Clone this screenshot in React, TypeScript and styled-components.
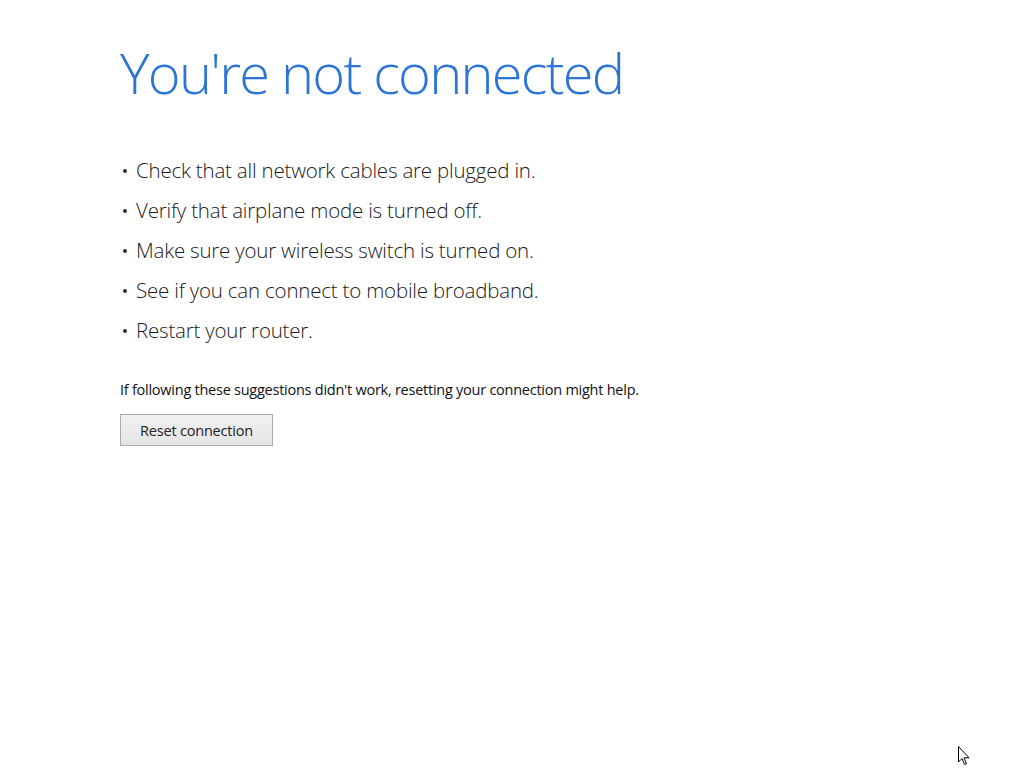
import React from 'react';
import styled, { createGlobalStyle } from 'styled-components';

const GlobalStyle = createGlobalStyle`
  html, body {
    margin: 0;
    padding: 0;
    background: #ffffff;
  }
  body {
    font-family: "Open Sans", "Noto Sans", sans-serif;
  }
`;

const Page = styled.div`
  position: relative;
  width: 1024px;
  height: 768px;
  box-sizing: border-box;
  padding: 36px 0 0 120px;
  overflow: hidden;
`;

const Title = styled.h1`
  margin: 0;
  font-weight: 300;
  font-size: 56px;
  line-height: 72px;
  color: #2b74d8;
  letter-spacing: -1.75px;
`;

const Tips = styled.ul`
  list-style: none;
  margin: 42px 0 0 0;
  padding: 0;
`;

const Tip = styled.li`
  display: flex;
  align-items: baseline;
  gap: 9px;
  font-size: 20.5px;
  font-weight: 300;
  line-height: 40px;
  color: #1a1a1a;
  letter-spacing: -0.2px;
`;

const Dot = styled.span`
  display: inline-block;
  width: 4px;
  height: 4px;
  border-radius: 50%;
  background: #333;
  margin-left: 3px;
  transform: translateY(-5px);
`;

const Hint = styled.p`
  margin: 30px 0 0 0;
  font-size: 14.5px;
  line-height: 20px;
  color: #111;
  letter-spacing: -0.25px;
`;

const Button = styled.button`
  margin-top: 14px;
  width: 153px;
  height: 32px;
  border: 1px solid #acacac;
  background: linear-gradient(#f0f0f0, #e5e5e5);
  font-family: inherit;
  font-size: 14.5px;
  color: #222;
  padding: 0;
  letter-spacing: -0.2px;
`;

const Cursor = styled.svg`
  position: absolute;
  left: 958px;
  top: 746px;
`;

const tips = [
  'Check that all network cables are plugged in.',
  'Verify that airplane mode is turned off.',
  'Make sure your wireless switch is turned on.',
  'See if you can connect to mobile broadband.',
  'Restart your router.',
];

const App = () => {
  return (
    <>
      <GlobalStyle />
      <Page>
        <Title>You're not connected</Title>
        <Tips>
          {tips.map((t) => (
            <Tip key={t}>
              <Dot />
              {t}
            </Tip>
          ))}
        </Tips>
        <Hint>If following these suggestions didn't work, resetting your connection might help.</Hint>
        <Button>Reset connection</Button>
        <Cursor width="14" height="21" viewBox="0 0 14 21">
          <path d="M0.5 0.5 L0.5 16 L4 12.5 L6.5 18.5 L8.5 17.6 L6 11.8 L11 11.8 Z" fill="#fff" stroke="#000" strokeWidth="1" strokeLinejoin="miter" />
        </Cursor>
      </Page>
    </>
  );
};

export default App;
